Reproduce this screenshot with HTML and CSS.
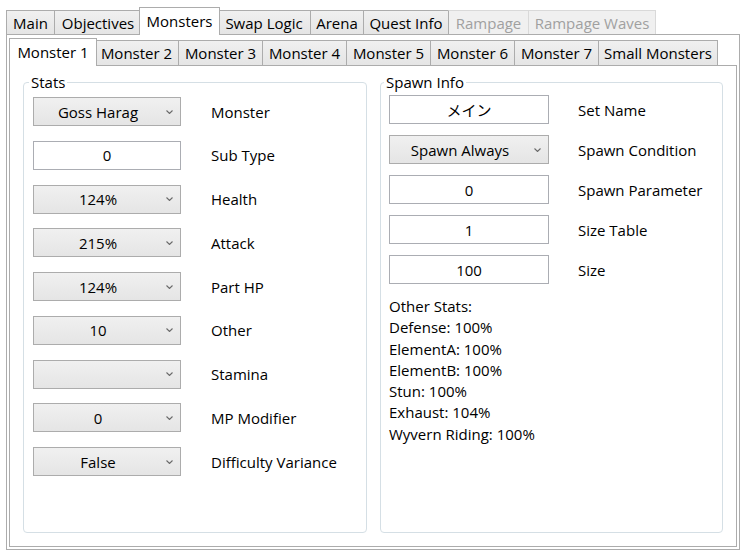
FILE: index.html
```html
<!DOCTYPE html>
<html>
<head>
<meta charset="utf-8">
<link rel="stylesheet" href="styles.css">
</head>
<body>
<div class="app">
  <div class="tabctl">
    <div class="strip strip-top">
      <div class="tab w-main">Main</div>
      <div class="tab w-obj">Objectives</div>
      <div class="tab sel w-mon">Monsters</div>
      <div class="tab w-swap">Swap Logic</div>
      <div class="tab w-arena">Arena</div>
      <div class="tab w-quest">Quest Info</div>
      <div class="tab dis first-dis w-ramp">Rampage</div>
      <div class="tab dis w-rw">Rampage Waves</div>
    </div>
    <div class="outer-panel">
      <div class="strip strip-inner">
        <div class="tab sel w-m1">Monster 1</div>
        <div class="tab w-m">Monster 2</div>
        <div class="tab w-m">Monster 3</div>
        <div class="tab w-m">Monster 4</div>
        <div class="tab w-m">Monster 5</div>
        <div class="tab w-m">Monster 6</div>
        <div class="tab w-m">Monster 7</div>
        <div class="tab w-small">Small Monsters</div>
      </div>
      <div class="inner-panel">
        <fieldset class="group stats">
          <legend>Stats</legend>
          <div class="rows stats-rows">
            <div class="combo"><span class="val">Goss Harag</span><svg class="arrow" width="7" height="4" viewBox="0 0 7 4"><path d="M0.5 0.5 L3.5 3.5 L6.5 0.5" stroke="#6a6a6a" stroke-width="1.1" fill="none"/></svg></div>
            <div class="lbl">Monster</div>
            <div class="textbox">0</div>
            <div class="lbl">Sub Type</div>
            <div class="combo"><span class="val">124%</span><svg class="arrow" width="7" height="4" viewBox="0 0 7 4"><path d="M0.5 0.5 L3.5 3.5 L6.5 0.5" stroke="#6a6a6a" stroke-width="1.1" fill="none"/></svg></div>
            <div class="lbl">Health</div>
            <div class="combo"><span class="val">215%</span><svg class="arrow" width="7" height="4" viewBox="0 0 7 4"><path d="M0.5 0.5 L3.5 3.5 L6.5 0.5" stroke="#6a6a6a" stroke-width="1.1" fill="none"/></svg></div>
            <div class="lbl">Attack</div>
            <div class="combo"><span class="val">124%</span><svg class="arrow" width="7" height="4" viewBox="0 0 7 4"><path d="M0.5 0.5 L3.5 3.5 L6.5 0.5" stroke="#6a6a6a" stroke-width="1.1" fill="none"/></svg></div>
            <div class="lbl">Part HP</div>
            <div class="combo"><span class="val">10</span><svg class="arrow" width="7" height="4" viewBox="0 0 7 4"><path d="M0.5 0.5 L3.5 3.5 L6.5 0.5" stroke="#6a6a6a" stroke-width="1.1" fill="none"/></svg></div>
            <div class="lbl">Other</div>
            <div class="combo"><span class="val"></span><svg class="arrow" width="7" height="4" viewBox="0 0 7 4"><path d="M0.5 0.5 L3.5 3.5 L6.5 0.5" stroke="#6a6a6a" stroke-width="1.1" fill="none"/></svg></div>
            <div class="lbl">Stamina</div>
            <div class="combo"><span class="val">0</span><svg class="arrow" width="7" height="4" viewBox="0 0 7 4"><path d="M0.5 0.5 L3.5 3.5 L6.5 0.5" stroke="#6a6a6a" stroke-width="1.1" fill="none"/></svg></div>
            <div class="lbl">MP Modifier</div>
            <div class="combo"><span class="val">False</span><svg class="arrow" width="7" height="4" viewBox="0 0 7 4"><path d="M0.5 0.5 L3.5 3.5 L6.5 0.5" stroke="#6a6a6a" stroke-width="1.1" fill="none"/></svg></div>
            <div class="lbl">Difficulty Variance</div>
          </div>
        </fieldset>
        <fieldset class="group spawn">
          <legend>Spawn Info</legend>
          <div class="rows spawn-rows">
            <div class="textbox">メイン</div>
            <div class="lbl">Set Name</div>
            <div class="combo"><span class="val">Spawn Always</span><svg class="arrow" width="7" height="4" viewBox="0 0 7 4"><path d="M0.5 0.5 L3.5 3.5 L6.5 0.5" stroke="#6a6a6a" stroke-width="1.1" fill="none"/></svg></div>
            <div class="lbl">Spawn Condition</div>
            <div class="textbox">0</div>
            <div class="lbl">Spawn Parameter</div>
            <div class="textbox">1</div>
            <div class="lbl">Size Table</div>
            <div class="textbox">100</div>
            <div class="lbl">Size</div>
          </div>
          <div class="other">
            <div>Other Stats:</div>
            <div>Defense: 100%</div>
            <div>ElementA: 100%</div>
            <div>ElementB: 100%</div>
            <div>Stun: 100%</div>
            <div>Exhaust: 104%</div>
            <div>Wyvern Riding: 100%</div>
          </div>
        </fieldset>
      </div>
    </div>
  </div>
</div>
</body>
</html>
```
FILE: styles.css
```css
* { box-sizing: border-box; }

body {
  margin: 0;
  background: #fff;
  color: #000;
  font-family: "Open Sans", "Noto Sans CJK JP", sans-serif;
  font-size: 15px;
}

.app { padding: 7px 0 0 6px; }

.tabctl { width: 734px; }

.strip {
  display: flex;
  align-items: flex-end;
}
.strip-top { height: 27px; }
.strip-inner { height: 28px; padding-left: 2px; }

.tab {
  flex: none;
  height: 24px;
  border: 1px solid #acacac;
  border-bottom: none;
  background: linear-gradient(#f0f0f0, #e5e5e5);
  display: flex;
  align-items: center;
  justify-content: center;
  margin-left: -1px;
  white-space: nowrap;
  line-height: 20px;
}
.tab:first-child { margin-left: 0; }
.strip-inner .tab { height: 25px; }

.tab.sel {
  height: 28px;
  background: #fff;
  margin: 0 -2px -1px -3px;
  position: relative;
  z-index: 1;
  align-items: flex-start;
  padding-top: 3px;
}
.strip-inner .tab.sel { height: 28px; margin-left: -2px; }

.tab.dis {
  background: #f0f0f0;
  border-color: #d9d9d9;
  color: #a0a0a0;
}
.tab.first-dis { border-left-color: #acacac; }

.w-main { width: 49px; }
.w-obj { width: 88px; }
.w-mon { width: 81px; }
.w-swap { width: 94px; }
.w-arena { width: 54px; }
.w-quest { width: 86px; }
.w-ramp { width: 81px; }
.w-rw { width: 128px; }
.w-m1 { width: 88px; }
.w-m { width: 85px; }
.w-small { width: 120px; }

.outer-panel {
  height: 516px;
  border: 1px solid #acacac;
  padding: 2px;
}

.inner-panel {
  height: 482px;
  border: 1px solid #acacac;
  display: flex;
  gap: 13px;
  padding: 6px 13px 13px;
  background: #fff;
}

.group {
  margin: 0;
  min-width: 0;
  border: 1px solid #d5dfe5;
  border-radius: 4px;
}
.group legend {
  padding: 0 2px;
  line-height: 20px;
}

.stats {
  width: 344px;
  padding: 5px 9px 0;
}
.stats legend { margin-left: -4px; }

.spawn {
  width: 343px;
  padding: 3px 8px 0;
}
.spawn legend { margin-left: -5px; }

.rows {
  display: grid;
  align-items: center;
}
.stats-rows {
  grid-template-columns: 148px auto;
  column-gap: 30px;
  row-gap: 14.75px;
}
.spawn-rows {
  grid-template-columns: 160px auto;
  column-gap: 29px;
  row-gap: 11px;
}

.combo {
  height: 29px;
  border: 1px solid #acacac;
  background: linear-gradient(#f0f0f0, #e5e5e5);
  display: flex;
  align-items: center;
}
.combo .val {
  flex: 1;
  text-align: center;
}
.combo .arrow {
  flex: none;
  margin: 0 7px 0 4px;
}

.textbox {
  height: 29px;
  border: 1px solid #abadb3;
  background: #fff;
  display: flex;
  align-items: center;
  justify-content: center;
}

.lbl { white-space: nowrap; }

.other {
  margin-top: 12px;
  line-height: 21.3px;
}
```
